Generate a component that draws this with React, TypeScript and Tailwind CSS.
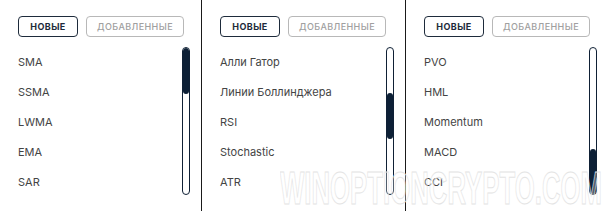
import React from "react";

type PanelProps = {
  items: string[];
  thumbTop: number;
  thumbHeight: number;
  width: string;
};

const font = { fontFamily: "Inter, 'Noto Sans', sans-serif" };

function Panel({ items, thumbTop, thumbHeight, width }: PanelProps) {
  return (
    <div className={`${width} h-full flex flex-col pt-[16px] pl-[18px] pr-[11px]`}>
      <div className="flex gap-[8px]">
        <button className="w-[60px] h-[21px] rounded-[4px] border border-[#1e2b3b] text-[9px] font-bold tracking-[0.4px] text-[#1e2b3b] flex items-center justify-center">
          НОВЫЕ
        </button>
        <button className="w-[98px] h-[21px] rounded-[4px] border border-[#b8b8b8] text-[9px] font-medium tracking-[0.4px] text-[#a0a0a0] flex items-center justify-center">
          ДОБАВЛЕННЫЕ
        </button>
      </div>
      <div className="flex mt-[10px]">
        <div className="flex-1 flex flex-col">
          {items.map((it) => (
            <div key={it} className="h-[30px] flex items-center text-[11px] text-[#444444]">
              {it}
            </div>
          ))}
        </div>
        <div className="w-[8px] h-[148px] rounded-full border border-[#0f2035] bg-white flex flex-col overflow-hidden">
          <div style={{ height: thumbTop }} className="shrink-0" />
          <div style={{ height: thumbHeight }} className="shrink-0 bg-[#0d2036] rounded-full" />
        </div>
      </div>
    </div>
  );
}

export default function App() {
  return (
    <div className="relative w-[608px] h-[211px] bg-white flex overflow-hidden" style={font}>
      <Panel width="w-[201px]" items={["SMA", "SSMA", "LWMA", "EMA", "SAR"]} thumbTop={0} thumbHeight={46} />
      <div className="w-px h-full bg-[#1a1a1a]" />
      <Panel
        width="w-[203px]"
        items={["Алли Гатор", "Линии Боллинджера", "RSI", "Stochastic", "ATR"]}
        thumbTop={45}
        thumbHeight={46}
      />
      <div className="w-px h-full bg-[#1a1a1a]" />
      <Panel width="flex-1" items={["PVO", "HML", "Momentum", "MACD", "CCI"]} thumbTop={101} thumbHeight={46} />
      <svg
        aria-hidden="true"
        className="absolute left-[280px] top-[168px] pointer-events-none"
        width="324"
        height="40"
        viewBox="0 0 324 40"
      >
        <text
          x="0"
          y="36"
          textLength="322"
          lengthAdjust="spacingAndGlyphs"
          fontFamily="'Liberation Sans', sans-serif"
          fontWeight="bold"
          fontSize="47"
          fill="rgba(255,255,255,0.3)"
          stroke="#e4e4e4"
          strokeWidth="1"
        >
          WINOPTIONCRYPTO.COM
        </text>
      </svg>
    </div>
  );
}
